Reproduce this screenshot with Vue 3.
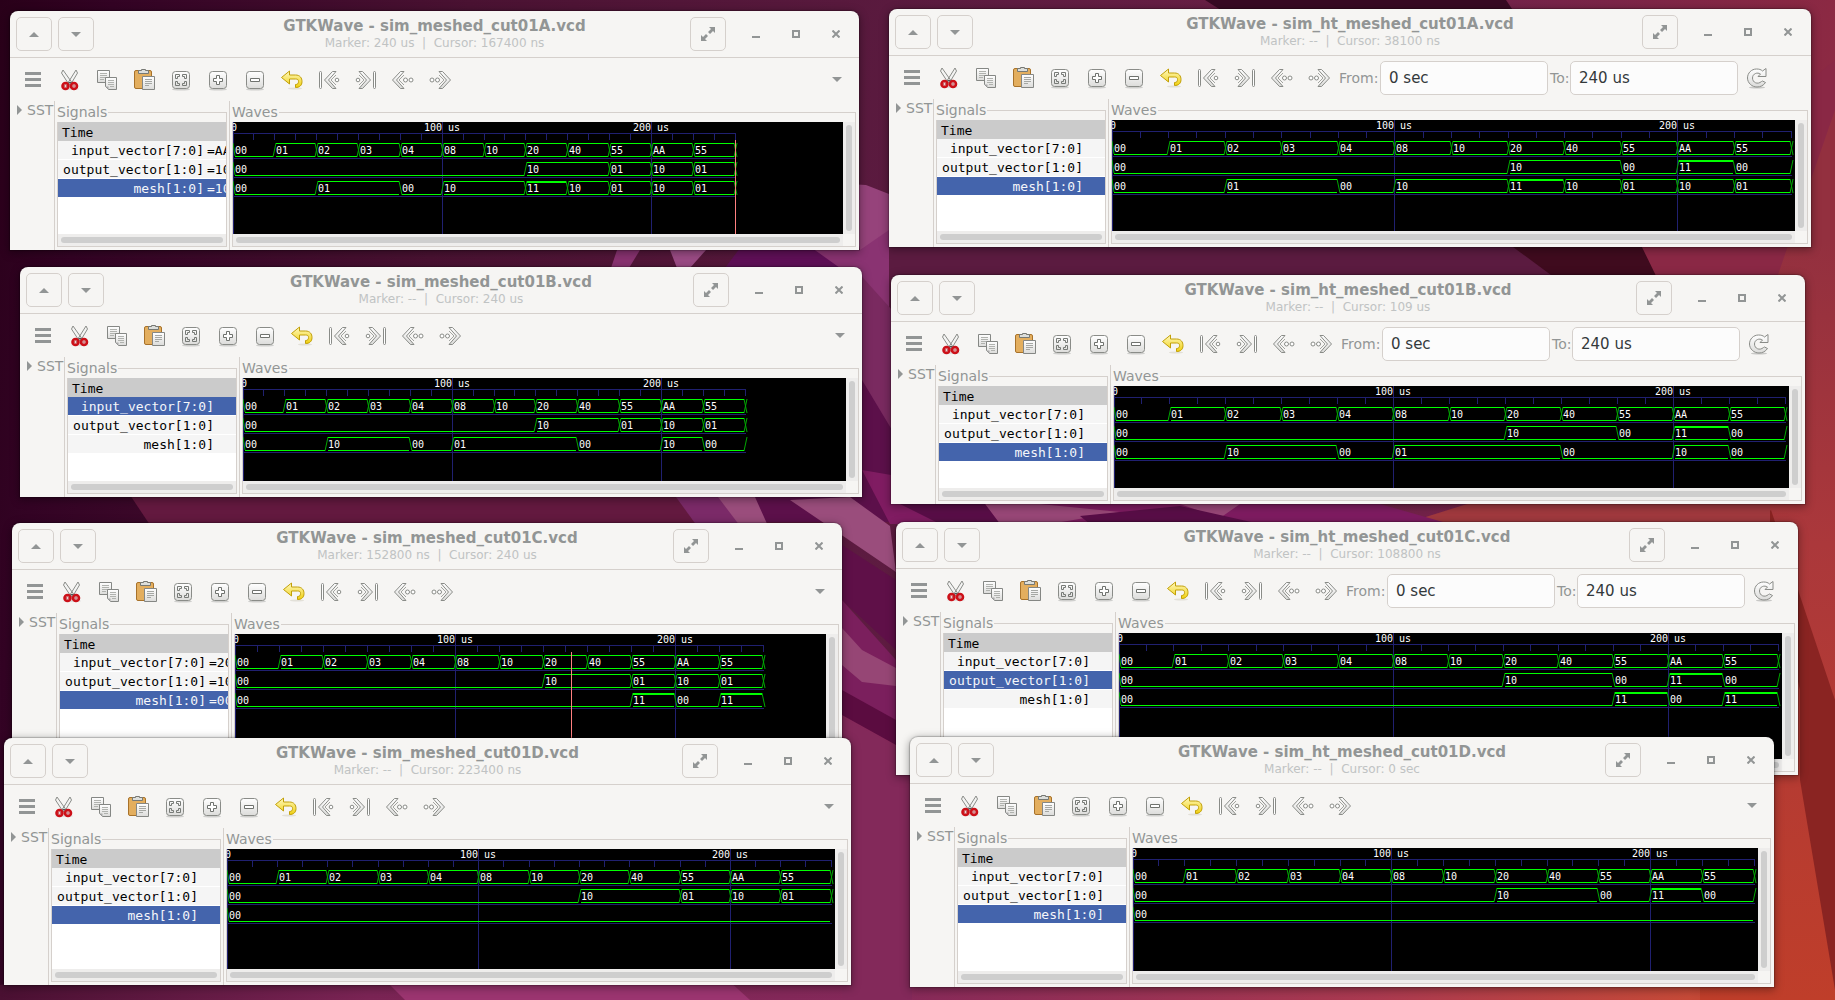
<script setup>
const IN = ['00', '01', '02', '03', '04', '08', '10', '20', '40', '55', 'AA', '55']
const inputWave = IN.map((v, i) => [i * 20, v])
const OUT = [[0, '00'], [140, '10'], [180, '01'], [200, '10'], [220, '01']]
const OUT_HT = [[0, '00'], [140, '10'], [180, '00'], [200, '11'], [220, '00']]

const tools = [
  ['menu', 'Menu'], ['cut', 'Cut'], ['copy', 'Copy'], ['paste', 'Paste'],
  ['fit', 'Zoom fit'], ['plus', 'Zoom in'], ['minus', 'Zoom out'], ['undo', 'Zoom undo'],
  ['first', 'Zoom to start'], ['last', 'Zoom to end'], ['prev', 'Previous edge'], ['next', 'Next edge'],
]

const windows = [
  { id: 'la', title: 'sim_meshed_cut01A', marker: '240 us', cursor: '167400 ns', x: 10, y: 11, w: 849, h: 239, span: 502, at: 240,
    sel: 2, vals: ['AA', '10', '10'], out: OUT,
    mesh: [[0, '00'], [40, '01'], [80, '00'], [100, '10'], [140, '11'], [160, '10'], [180, '01'], [200, '10'], [220, '01']] },
  { id: 'ra', title: 'sim_ht_meshed_cut01A', marker: '--', cursor: '38100 ns', x: 889, y: 9, w: 922, h: 238, span: 679, range: true,
    sel: 2, out: OUT_HT,
    mesh: [[0, '00'], [40, '01'], [80, '00'], [100, '10'], [140, '11'], [160, '10'], [180, '01'], [200, '10'], [220, '01']] },
  { id: 'lb', title: 'sim_meshed_cut01B', marker: '--', cursor: '240 us', x: 20, y: 267, w: 842, h: 230, span: 502,
    sel: 0, out: OUT,
    mesh: [[0, '00'], [40, '10'], [80, '00'], [100, '01'], [160, '00'], [200, '10'], [220, '00']] },
  { id: 'rb', title: 'sim_ht_meshed_cut01B', marker: '--', cursor: '109 us', x: 891, y: 275, w: 914, h: 229, span: 671, range: true,
    sel: 2, out: OUT_HT,
    mesh: [[0, '00'], [40, '10'], [80, '00'], [100, '01'], [160, '00'], [200, '10'], [220, '00']] },
  { id: 'lc', title: 'sim_meshed_cut01C', marker: '152800 ns', cursor: '240 us', x: 12, y: 523, w: 830, h: 240, span: 528, at: 152.8,
    sel: 2, vals: ['20', '10', '00'], out: OUT,
    mesh: [[0, '00'], [180, '11'], [200, '00'], [220, '11']] },
  { id: 'rc', title: 'sim_ht_meshed_cut01C', marker: '--', cursor: '108800 ns', x: 896, y: 522, w: 902, h: 253, span: 659, range: true,
    sel: 1, out: OUT_HT,
    mesh: [[0, '00'], [180, '11'], [200, '00'], [220, '11']] },
  { id: 'ld', title: 'sim_meshed_cut01D', marker: '--', cursor: '223400 ns', x: 4, y: 738, w: 847, h: 247, span: 604,
    sel: 2, out: OUT, mesh: [[0, '00']] },
  { id: 'rd', title: 'sim_ht_meshed_cut01D', marker: '--', cursor: '0 sec', x: 910, y: 737, w: 864, h: 250, span: 621,
    sel: 2, out: OUT_HT, mesh: [[0, '00']] },
].map((w) => {
  const px = (t) => Math.floor((t * w.span) / 240)
  const traces = [inputWave, w.out, w.mesh].map((wave, row) => {
    const top = 21 + row * 19
    const bottom = top + 13
    let lines = ''
    let thick = ''
    let edges = `M0 ${top}L2 ${bottom}`
    const labels = []
    wave.forEach(([t, v], i) => {
      const a = px(t)
      const b = px(i + 1 < wave.length ? wave[i + 1][0] : 240)
      lines += `M${a + 2} ${bottom}.5H${b - 1}`
      if (v !== '00') lines += `M${a + 2} ${top}.5H${b - 1}`
      if (v === '11') thick += `M${a + 2} ${top + 1}H${b - 1}`
      if (i > 0) {
        if (wave[i - 1][1] !== '00') edges += `M${a - 1} ${top}L${a + 2} ${bottom + 1}`
        if (v !== '00') edges += `M${a - 1} ${bottom + 1}L${a + 2} ${top}`
      }
      labels.push({ x: a + 2, y: top + 11, v })
    })
    if (wave.length > 1) {
      const last = wave[wave.length - 1][1]
      const e = px(240)
      if (last !== '00') edges += `M${e - 1} ${top}L${e + 2} ${bottom + 1}`
      if (last !== '11') edges += `M${e - 1} ${bottom + 1}L${e + 2} ${top}`
    }
    return { lines, thick, edges, labels, base: bottom + 2.5 }
  })
  let ticks = ''
  for (let t = 10; t <= 240; t += 10) ticks += `M${px(t)}.5 11V18`
  return {
    ...w,
    px,
    traces,
    ticks,
    names: ['input_vector[7:0]', 'output_vector[1:0]', 'mesh[1:0]'],
  }
})
</script>

<template>
  <main class="desktop">
    <svg class="wallpaper" viewBox="0 0 1835 1000" preserveAspectRatio="none" aria-hidden="true">
      <defs>
        <linearGradient id="base" x1="0" y1="0" x2="1835" y2="300" gradientUnits="userSpaceOnUse">
          <stop offset="0" stop-color="#290019" />
          <stop offset=".06" stop-color="#330324" />
          <stop offset=".25" stop-color="#4a1232" />
          <stop offset=".5" stop-color="#5c1b40" />
          <stop offset=".8" stop-color="#74234a" />
          <stop offset="1" stop-color="#8f2a42" />
        </linearGradient>
        <linearGradient id="low" x1="0" y1="0" x2="1835" y2="0" gradientUnits="userSpaceOnUse">
          <stop offset="0" stop-color="#4a1032" />
          <stop offset=".2" stop-color="#7a2454" />
          <stop offset=".48" stop-color="#85295a" />
          <stop offset=".75" stop-color="#ab3a50" />
          <stop offset=".92" stop-color="#c64a38" />
          <stop offset="1" stop-color="#b23424" />
        </linearGradient>
        <linearGradient id="side" x1="0" y1="240" x2="0" y2="1000" gradientUnits="userSpaceOnUse">
          <stop offset="0" stop-color="#93303f" />
          <stop offset=".4" stop-color="#ab383b" />
          <stop offset="1" stop-color="#bf3e2a" />
        </linearGradient>
      </defs>
      <path fill="url(#base)" d="M0 0H1835V1000H0Z" />
      <path fill="#380a24" d="M1205 0H1506L1560 80L1300 60Z" />
      <path fill="#5b1b40" d="M862 245H1640L1690 280H862Z" />
      <path fill="#3f0b1e" d="M1513 247H1642L1658 278H1555Z" />
      <path fill="#8a2845" d="M1642 247L1811 80L1835 60V280H1658Z" />
      <path fill="#63193f" d="M130 495H890V525H150Z" />
      <path fill="url(#low)" d="M842 700H1835V1000H0V985L842 820Z" />
      <path fill="url(#side)" d="M1790 240L1835 110V1000H1700V500Z" />
      <path fill="#8a2422" d="M1771 510L1798 590L1835 700V990L1800 780V690L1760 520Z" />
      <path fill="#9b3570" d="M385 980H728L750 1000H405Z" />
      <path fill="#a23a3f" d="M1480 500H1770V525H1400Z" />
      <path fill="#96437b" d="M848 184L866 185L889 194V300L862 262Z" />
      <path fill="#8a3372" d="M617 250H640L629 268H611ZM775 250H860L889 230V330L862 420Z" />
      <path fill="#9c4c86" d="M670 250H706L690 268H677Z" />
      <path fill="#601058" d="M740 248H812L840 268H725Z" />
      <path fill="#7a2a60" d="M856 270L892 310V450L862 380Z" />
      <path fill="#5c104a" d="M862 380L892 430V522H740L735 497H862Z" />
      <path fill="#7b2a68" d="M676 497H720L742 526H697Z" />
      <path fill="#9a4d7c" d="M718 497H755L768 526H740ZM790 500L850 497L890 526L896 572Z" />
      <path fill="#5f1048" d="M842 545L896 580V650L842 600Z" />
      <path fill="#7b1f5d" d="M842 600L896 660V745L842 700Z" />
      <path fill="#964675" d="M842 628L862 650L896 668V686L862 682L842 665Z" />
      <path fill="#5b0c40" d="M842 690L896 720V745L842 715Z" />
      <path fill="#83295a" d="M842 717L896 746L912 760V1000H842Z" />
      <path fill="#801c62" d="M862 470L1060 504H1380L1450 524H890Z" />
      <path fill="#9a4879" d="M985 504H1040L1120 512L1050 524H1000ZM1180 504H1240L1220 518Z" />
      <path fill="#5a0e48" d="M900 504H985L1000 524H940ZM1080 516L1180 506L1260 524H1090Z" />
    </svg>

    <svg class="symbols" aria-hidden="true">
      <defs>
        <linearGradient id="paper" x1="0" y1="0" x2="0" y2="1">
          <stop offset="0" stop-color="#fff" /><stop offset="1" stop-color="#dcdcda" />
        </linearGradient>
        <linearGradient id="gold" x1="0" y1="0" x2="0" y2="1">
          <stop offset="0" stop-color="#fff9c0" /><stop offset="1" stop-color="#f0d010" />
        </linearGradient>
        <symbol id="menu" viewBox="0 0 24 24">
          <path fill="#929595" d="M4 4h16v3H4zM4 10h16v3H4zM4 16h16v3H4z" />
        </symbol>
        <symbol id="cut" viewBox="0 0 24 24">
          <ellipse cx="12" cy="21" rx="9" ry="1" fill="#ddd" />
          <path fill="#f4f4f3" stroke="#8a8c88" d="M5 2L3.500 5L10 15l2 1.500L13.500 14zM18 2l1.500 3L13.500 15l-2 1.500L10.500 14z" />
          <path fill="none" stroke="#555" d="M10.500 14.500h3" />
          <circle cx="7.500" cy="18" r="3" fill="#fff" stroke="#cc1018" stroke-width="2.600" />
          <circle cx="16" cy="18" r="3" fill="#fff" stroke="#cc1018" stroke-width="2.600" />
          <circle cx="7.500" cy="18" r="1.200" fill="none" stroke="#9a0008" stroke-width=".6" />
          <circle cx="16" cy="18" r="1.200" fill="none" stroke="#9a0008" stroke-width=".6" />
        </symbol>
        <symbol id="copy" viewBox="0 0 24 24">
          <path fill="url(#paper)" stroke="#858784" d="M2.500 2.500h12v12h-12z" />
          <path stroke="#b0b2ae" d="M5 5.500h7M5 7.500h7M5 9.500h6M5 11.500h4" />
          <path fill="url(#paper)" stroke="#858784" d="M10.500 9.500h11v12h-8l-3-3z" />
          <path stroke="#b0b2ae" d="M13 12.500h6M13 14.500h6M13 16.500h6M15 18.500h4" />
          <path fill="#aaa" d="M10.500 18.500h3v3z" />
        </symbol>
        <symbol id="paste" viewBox="0 0 24 24">
          <rect x="2.500" y="2.500" width="17" height="18" rx="1.500" fill="#e3ae5e" stroke="#a8722a" />
          <path fill="#dcdedb" stroke="#777974" d="M6.500 5.500v-3h3v-1h4v1h3v3z" />
          <path fill="url(#paper)" stroke="#858784" d="M10.500 8.500h12v13h-12z" />
          <path stroke="#a5a7a3" d="M13 11.500h7M13 13.500h7M13 15.500h7M13 17.500h4" />
        </symbol>
        <symbol id="fit" viewBox="0 0 24 24">
          <ellipse cx="12" cy="21.500" rx="9" ry="1" fill="#cfcfcd" />
          <rect x="3.500" y="3.500" width="17" height="17" rx="3" fill="url(#paper)" stroke="#8a8c88" />
          <path fill="none" stroke="#777a76" d="M6.500 10.500v-4h4v2h-2v2zM13.500 6.500h4v4h-2v-2h-2zM6.500 13.500h2v2h2v2h-4zM15.500 13.500h2v4h-4v-2h2z" />
        </symbol>
        <symbol id="plus" viewBox="0 0 24 24">
          <ellipse cx="12" cy="21.500" rx="9" ry="1" fill="#cfcfcd" />
          <rect x="3.500" y="3.500" width="17" height="17" rx="3" fill="url(#paper)" stroke="#8a8c88" />
          <path fill="#fff" stroke="#6f726e" d="M10.500 7.500h3v3h3v3h-3v3h-3v-3h-3v-3h3z" />
        </symbol>
        <symbol id="minus" viewBox="0 0 24 24">
          <ellipse cx="12" cy="21.500" rx="9" ry="1" fill="#cfcfcd" />
          <rect x="3.500" y="3.500" width="17" height="17" rx="3" fill="url(#paper)" stroke="#8a8c88" />
          <path fill="#fff" stroke="#6f726e" d="M7.500 10.500h9v3h-9z" />
        </symbol>
        <symbol id="undo" viewBox="0 0 24 24">
          <ellipse cx="15" cy="20.500" rx="7" ry="1" fill="#e2e0d8" />
          <path fill="url(#gold)" stroke="#c2a008" stroke-linejoin="round" d="M1.500 9.500L9.500 3v4h6c4.500 0 6.500 3 6.500 6.500 0 4-2.500 6-6.500 6v-3c2 0 3-1 3-3s-1-2.500-3-2.500h-6v5z" />
        </symbol>
        <symbol id="first" viewBox="0 0 24 24">
          <rect x="2.500" y="3.500" width="2" height="17" rx="1" fill="#fff" stroke="#8a8c88" />
          <path fill="url(#paper)" stroke="#8a8c88" stroke-linejoin="round" d="M7.500 12L15.500 3.500h3.500L11.500 12l7.500 8.500h-3.500z" />
          <path fill="none" stroke="#a2a4a0" stroke-linejoin="round" d="M19 7l-5 5l5 5" />
          <circle cx="20" cy="12" r="1.800" fill="#fff" stroke="#8a8c88" />
        </symbol>
        <symbol id="last" viewBox="0 0 24 24">
          <rect x="19.500" y="3.500" width="2" height="17" rx="1" fill="#fff" stroke="#8a8c88" />
          <path fill="url(#paper)" stroke="#8a8c88" stroke-linejoin="round" d="M16.500 12L8.500 3.500H5L12.500 12L5 20.500h3.500z" />
          <path fill="none" stroke="#a2a4a0" stroke-linejoin="round" d="M5 7l5 5l-5 5" />
          <circle cx="4" cy="12" r="1.800" fill="#fff" stroke="#8a8c88" />
        </symbol>
        <symbol id="prev" viewBox="0 0 24 24">
          <path fill="url(#paper)" stroke="#8a8c88" stroke-linejoin="round" d="M1.500 12L9.500 3.500H13L5.500 12l7.500 8.500H9.500z" />
          <path fill="none" stroke="#a2a4a0" stroke-linejoin="round" d="M13 7l-5 5l5 5" />
          <circle cx="14.500" cy="12" r="2" fill="#fff" stroke="#8a8c88" />
          <circle cx="20" cy="12" r="2" fill="#fff" stroke="#8a8c88" />
        </symbol>
        <symbol id="next" viewBox="0 0 24 24">
          <path fill="url(#paper)" stroke="#8a8c88" stroke-linejoin="round" d="M22.500 12L14.500 3.500H11L18.500 12L11 20.500h3.500z" />
          <path fill="none" stroke="#a2a4a0" stroke-linejoin="round" d="M11 7l5 5l-5 5" />
          <circle cx="9.500" cy="12" r="2" fill="#fff" stroke="#8a8c88" />
          <circle cx="4" cy="12" r="2" fill="#fff" stroke="#8a8c88" />
        </symbol>
        <symbol id="reload" viewBox="0 0 24 24">
          <ellipse cx="12" cy="21.500" rx="8" ry="1" fill="#c8c8c6" />
          <path fill="url(#paper)" stroke="#8a8c88" stroke-linejoin="round" d="M21 2.500v8h-8l2.500-2.500c-3-2-8-.5-8 4s5 7 9 3.500l1-.5 3 1.500c-2 3-5 4.500-8.500 4.500-5 0-9.500-4-9.500-9s4-9 9-9c2.500 0 4.500.5 6 2z" />
        </symbol>
      </defs>
    </svg>

    <section
      v-for="w in windows"
      :key="w.id"
      class="window"
      :style="{ left: w.x + 'px', top: w.y + 'px', width: w.w + 'px', height: w.h + 'px' }"
    >
      <header class="titlebar">
        <div class="side">
          <button class="framed" aria-label="Up"><svg width="10" height="5"><path d="M0 5L5 0L10 5Z" /></svg></button>
          <button class="framed" aria-label="Down"><svg width="10" height="5"><path d="M0 0H10L5 5Z" /></svg></button>
        </div>
        <div class="titles">
          <h1>GTKWave - {{ w.title }}.vcd</h1>
          <p>Marker: {{ w.marker }}&nbsp; |&nbsp; Cursor: {{ w.cursor }}</p>
        </div>
        <div class="side end">
          <button class="framed expand" aria-label="Full screen">
            <svg width="14" height="14"><path d="M8 0H14V6L12 4L9 7L7 5L10 2ZM6 14H0V8L2 10L5 7L7 9L4 12Z" /></svg>
          </button>
          <button class="ctl" aria-label="Minimize"><svg width="8" height="8"><path d="M0 6H8V8H0Z" /></svg></button>
          <button class="ctl" aria-label="Maximize"><svg width="8" height="8"><path fill-rule="evenodd" d="M0 0H8V8H0ZM2 2V6H6V2Z" /></svg></button>
          <button class="ctl" aria-label="Close"><svg width="8" height="8"><path class="stroke" d="M0.500 0.500L7.500 7.500M7.500 0.500L0.500 7.500" /></svg></button>
        </div>
      </header>

      <nav class="toolbar">
        <button v-for="[icon, name] in tools" :key="icon" class="tool" :aria-label="name">
          <svg width="24" height="24"><use :href="'#' + icon" /></svg>
        </button>
        <template v-if="w.range">
          <label class="from" :for="w.id + '-from'">From:</label>
          <input :id="w.id + '-from'" type="text" value="0 sec" />
          <label class="to" :for="w.id + '-to'">To:</label>
          <input :id="w.id + '-to'" type="text" value="240 us" />
          <button class="tool" aria-label="Reload"><svg width="24" height="24"><use href="#reload" /></svg></button>
        </template>
        <button v-else class="tool more" aria-label="More"><svg width="10" height="5"><path d="M0 0H10L5 5Z" /></svg></button>
      </nav>

      <div class="panes">
        <aside class="sst">
          <button><svg width="5" height="10"><path d="M0 0L5 5L0 10Z" /></svg>SST</button>
        </aside>

        <section class="frame signals">
          <h2>Signals</h2>
          <div class="box">
            <div class="list">
              <table>
                <colgroup><col class="names" /><col /></colgroup>
                <thead><tr><th colspan="2">Time</th></tr></thead>
                <tbody>
                  <tr v-for="(n, i) in w.names" :key="n" :class="{ selected: i === w.sel }">
                    <td class="name">{{ n }}</td>
                    <td class="value">{{ w.vals ? '=' + w.vals[i] : '' }}</td>
                  </tr>
                </tbody>
              </table>
            </div>
            <div class="hbar"><i></i></div>
          </div>
        </section>

        <section class="frame waves">
          <h2>Waves</h2>
          <div class="box">
            <svg class="canvas">
              <path class="grid" :d="w.ticks" />
              <path class="grid" :d="`M0 11.500H${w.px(240) + 1}M.5 0V400M${w.px(100)}.5 0V400M${w.px(200)}.5 0V400`" />
              <text class="mid" x="1" y="9">0</text>
              <text class="mid" :x="w.px(100)" y="9">100 us</text>
              <text class="mid" :x="w.px(200)" y="9">200 us</text>
              <g v-for="(t, i) in w.traces" :key="i">
                <path class="grid" :d="`M0 ${t.base}H${w.px(240) + 1}`" />
                <path class="edge" :d="t.edges" />
                <path class="level" :d="t.lines" />
                <path class="level thick" :d="t.thick" />
                <text v-for="l in t.labels" :key="l.x" :x="l.x" :y="l.y">{{ l.v }}</text>
              </g>
              <path v-if="w.at" class="marker" :d="`M${w.px(w.at)}.5 18V400`" />
            </svg>
            <div class="vbar"><i></i></div>
            <div class="hbar"><i></i></div>
          </div>
        </section>
      </div>
    </section>
  </main>
</template>

<style>
body {
  margin: 0;
  background: #4a1232;
}
</style>

<style scoped>
.desktop {
  position: relative;
  min-height: 100vh;
  overflow: hidden;
  font-family: "DejaVu Sans", sans-serif;
  font-size: 14px;
  color: #929595;
}
.wallpaper {
  position: absolute;
  inset: 0;
  width: 100%;
  height: 100%;
}
.symbols {
  position: absolute;
  width: 0;
  height: 0;
}
.window {
  position: absolute;
  display: flex;
  flex-direction: column;
  overflow: hidden;
  background: #f6f5f3;
  border-radius: 8px 8px 0 0;
  box-shadow: 0 0 1px 1px rgba(0, 0, 0, 0.2), 0 2px 8px 1px rgba(0, 0, 0, 0.35);
}
button {
  display: flex;
  align-items: center;
  justify-content: center;
  padding: 0;
  border: 0;
  background: none;
  color: inherit;
  font: inherit;
}
button path {
  fill: #929595;
}
button path.stroke {
  fill: none;
  stroke: #929595;
  stroke-width: 2;
}
.titlebar {
  display: grid;
  grid-template-columns: 1fr auto 1fr;
  height: 46px;
  border-bottom: 1px solid #d5d0cc;
}
.side {
  display: flex;
  gap: 6px;
  padding: 6px 6px 0;
}
.side.end {
  justify-content: flex-end;
  gap: 0;
  padding-right: 3px;
}
.framed {
  box-sizing: border-box;
  width: 36px;
  height: 34px;
  border: 1px solid #d5d0cc;
  border-radius: 5px;
}
.expand {
  margin-right: 10px;
}
.ctl {
  width: 40px;
  height: 34px;
}
.titles {
  text-align: center;
  white-space: nowrap;
}
h1 {
  margin: 6px 0 0;
  font-size: 15px;
  line-height: 18px;
}
p {
  margin: 0;
  font-size: 12px;
  line-height: 16px;
  color: #c0c3c3;
}
.toolbar {
  display: flex;
  align-items: center;
  height: 43px;
  padding-left: 4px;
}
.tool {
  width: 37px;
  height: 34px;
}
.more {
  margin-left: auto;
  margin-right: 4px;
}
.from {
  width: 41px;
  padding-left: 2px;
}
.to {
  width: 20px;
  padding-left: 2px;
}
input {
  box-sizing: border-box;
  width: 168px;
  height: 34px;
  padding: 0 8px;
  border: 1px solid #d5d0cc;
  border-radius: 5px;
  background: #fcfcfc;
  color: #33393b;
  font-family: inherit;
  font-size: 15px;
}
.panes {
  display: flex;
  flex: 1;
  min-height: 0;
}
.sst {
  width: 44px;
  border-right: 1px solid #d5d0cc;
  overflow: hidden;
}
.sst button {
  height: 18px;
  padding-left: 7px;
  gap: 5px;
}
.frame {
  display: flex;
  flex-direction: column;
  margin: 0 2px 3px;
}
.signals {
  width: 170px;
}
.waves {
  flex: 1;
  min-width: 0;
  margin: 0;
  padding: 0 3px 3px 2px;
  border-left: 1px solid #d5d0cc;
}
h2 {
  display: flex;
  align-items: center;
  height: 21px;
  margin: 0;
  font-size: 14px;
  font-weight: 400;
}
h2::after {
  content: "";
  flex: 1;
  align-self: flex-end;
  height: 9px;
  margin-left: 1px;
  border: solid #d5d0cc;
  border-width: 1px 1px 0 0;
}
.box {
  display: grid;
  grid-template: 1fr 12px / 1fr auto;
  flex: 1;
  min-height: 0;
  border: solid #d5d0cc;
  border-width: 0 1px 1px;
}
.signals .box {
  grid-template-columns: 1fr;
}
.list {
  min-width: 0;
  overflow: hidden;
  background: #fff;
}
table {
  width: 100%;
  table-layout: fixed;
  border-spacing: 0;
  font-family: "DejaVu Sans Mono", monospace;
  font-size: 13px;
  line-height: 18px;
  color: #000;
  white-space: pre;
}
.names {
  width: 146px;
}
th {
  height: 19px;
  padding: 2px 4px 0;
  box-sizing: border-box;
  line-height: 17px;
  background: #cbcbcb;
  font-weight: 400;
  text-align: left;
}
td {
  height: 17px;
  padding: 1px 0 0;
  line-height: 17px;
  overflow: hidden;
  background: #f5f5f5;
  border-bottom: 1px solid #fff;
}
.name {
  text-align: right;
}
td.value {
  padding-left: 3px;
}
.selected td {
  background: #4464ac;
  color: #f4f6fa;
}
.hbar,
.vbar {
  display: flex;
  padding: 3px;
  background: #eeedec;
}
.hbar i,
.vbar i {
  flex: 1;
  border-radius: 3px;
  background: #cecece;
}
.vbar {
  width: 6px;
}
.canvas {
  display: block;
  width: 100%;
  height: 100%;
  min-height: 0;
  background: #000;
  overflow: hidden;
}
.canvas path {
  fill: none;
  stroke-width: 1;
}
.canvas text {
  fill: #fff;
  font-family: "DejaVu Sans Mono", monospace;
  font-size: 10px;
}
.canvas .mid {
  text-anchor: middle;
}
.canvas .grid {
  stroke: #202070;
}
.canvas .edge {
  stroke: #00a800;
}
.canvas .level {
  stroke: #00ff00;
}
.canvas .thick {
  stroke-width: 2;
}
.canvas .marker {
  stroke: #ff8080;
}
</style>
